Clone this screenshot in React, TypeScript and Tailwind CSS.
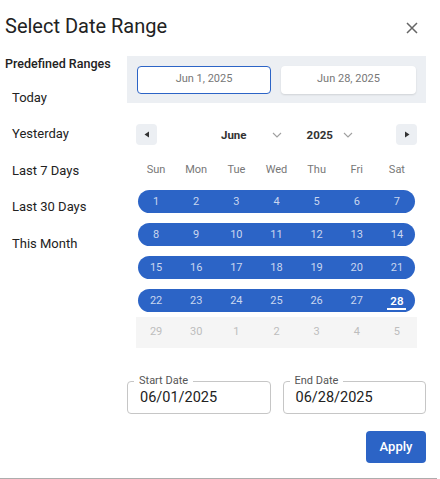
import React from "react";

const BLUE = "bg-[#2c64c6]";

const weeks = [
  [1, 2, 3, 4, 5, 6, 7],
  [8, 9, 10, 11, 12, 13, 14],
  [15, 16, 17, 18, 19, 20, 21],
  [22, 23, 24, 25, 26, 27, 28],
];
const nextRow = [29, 30, 1, 2, 3, 4, 5];
const weekdays = ["Sun", "Mon", "Tue", "Wed", "Thu", "Fri", "Sat"];
const ranges = ["Today", "Yesterday", "Last 7 Days", "Last 30 Days", "This Month"];

function Chevron() {
  return (
    <svg width="10" height="6" viewBox="0 0 10 6" fill="none">
      <path d="M1 1l4 4 4-4" stroke="#a0a0a0" strokeWidth="1.1" />
    </svg>
  );
}

function NavBtn({ dir }: { dir: "left" | "right" }) {
  return (
    <div className="w-[21px] h-[21px] rounded-[4px] bg-[#eceff3] flex items-center justify-center">
      <svg width="6" height="7" viewBox="0 0 6 7">
        {dir === "left" ? (
          <path d="M5 0.5v6L0.5 3.5z" fill="#333" />
        ) : (
          <path d="M1 0.5v6L5.5 3.5z" fill="#333" />
        )}
      </svg>
    </div>
  );
}

function Field({ label, value }: { label: string; value: string }) {
  return (
    <div className="relative w-[144px] h-[33px] border border-[#c6c6c6] rounded-[4px] flex items-center pl-[12px]">
      <span className="absolute top-[-8px] left-[6px] px-[5px] bg-white text-[11px] leading-[14px] text-[#555]">
        {label}
      </span>
      <span className="text-[14.5px] text-[#222] leading-[18px] mt-[1px]">{value}</span>
    </div>
  );
}

export default function App() {
  return (
    <div
      className="w-[437px] h-[479px] bg-white border-b border-[#adadad] relative"
      style={{ fontFamily: "Roboto, 'Noto Sans', sans-serif" }}
    >
      {/* header */}
      <div className="flex items-center justify-between pl-[5px] pr-[19px] pt-[14px]">
        <h1 className="text-[20px] leading-[24px] text-[#222] font-normal">Select Date Range</h1>
        <svg width="12" height="12" viewBox="0 0 12 12" className="mt-[4px]">
          <path d="M1 1l10 10M11 1L1 11" stroke="#666" strokeWidth="1.5" />
        </svg>
      </div>

      <div className="flex mt-[18px]">
        {/* left column */}
        <div className="w-[127px] pl-[5px]">
          <div className="text-[12.5px] leading-[16px] font-medium text-[#222]">Predefined Ranges</div>
          <div className="flex flex-col gap-[20.6px] mt-[17.5px] pl-[7px]">
            {ranges.map((r) => (
              <div key={r} className="text-[13px] leading-[16px] text-[#222]">
                {r}
              </div>
            ))}
          </div>
        </div>

        {/* right column */}
        <div className="w-[299px]">
          <div className="bg-[#eceff3] h-[47px] flex items-center gap-[10px] px-[10px]">
            <div className="w-[134px] h-[28px] bg-white border border-[#2c64c6] rounded-[4px] flex items-center justify-center text-[11px] text-[#777]">
              Jun 1, 2025
            </div>
            <div className="w-[135px] h-[28px] bg-white rounded-[4px] shadow-[0_1px_2px_rgba(0,0,0,0.12)] flex items-center justify-center text-[11px] text-[#777]">
              Jun 28, 2025
            </div>
          </div>

          <div className="px-[9px]">
            {/* nav */}
            <div className="flex items-center mt-[21px] h-[21px]">
              <NavBtn dir="left" />
              <span className="ml-[64px] text-[11.5px] font-bold text-[#333] leading-[14px]">June</span>
              <span className="ml-[25px]">
                <Chevron />
              </span>
              <span className="ml-[25px] text-[11.5px] font-bold text-[#333] leading-[14px]">2025</span>
              <span className="ml-[10px]">
                <Chevron />
              </span>
              <div className="flex-1" />
              <NavBtn dir="right" />
            </div>

            {/* weekdays */}
            <div className="grid grid-cols-7 mt-[15px] h-[21px] items-center">
              {weekdays.map((d) => (
                <div key={d} className="text-center text-[11px] text-[#777]">
                  {d}
                </div>
              ))}
            </div>

            <div className="mt-[4px]">
              {weeks.map((w, i) => (
                <div key={i} className="h-[33px] flex items-center">
                  <div className={`w-full mx-[2px] h-[23px] rounded-full ${BLUE} flex items-center`}>
                    <div className="grid grid-cols-7 w-[281px] -mx-[2px] shrink-0">
                      {w.map((d) =>
                        d === 28 ? (
                          <div key={d} className="flex justify-center">
                            <span className="relative text-[11.5px] font-semibold text-white leading-[14px]">
                              28
                              <span className="absolute left-[-3px] right-[-3px] bottom-[-2px] h-[2px] bg-white" />
                            </span>
                          </div>
                        ) : (
                          <div key={d} className="text-center text-[11px] text-[#c9d6ef] leading-[14px]">
                            {d}
                          </div>
                        )
                      )}
                    </div>
                  </div>
                </div>
              ))}
              <div className="grid grid-cols-7 h-[31px] items-center bg-[#f5f5f5]">
                {nextRow.map((d, i) => (
                  <div key={i} className="text-center text-[11px] text-[#bdbdbd]">
                    {d}
                  </div>
                ))}
              </div>
            </div>
          </div>

          {/* inputs */}
          <div className="flex gap-[12px] mt-[33px]">
            <Field label="Start Date" value="06/01/2025" />
            <Field label="End Date" value="06/28/2025" />
          </div>

          <div className="flex justify-end mt-[17px]">
            <button className={`w-[60px] h-[32px] rounded-[4px] ${BLUE} text-white text-[13px] font-medium`}>
              Apply
            </button>
          </div>
        </div>
      </div>
    </div>
  );
}
